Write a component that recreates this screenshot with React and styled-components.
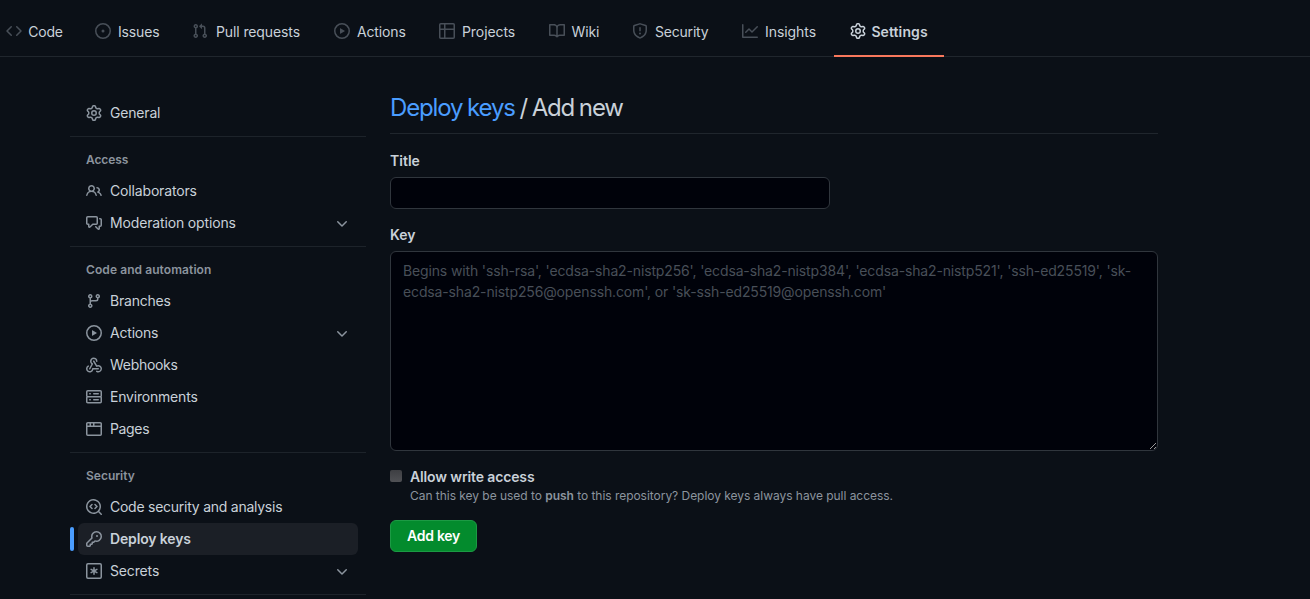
import React from "react";
import styled, { createGlobalStyle } from "styled-components";

const Global = createGlobalStyle`
  * { box-sizing: border-box; }
  body {
    margin: 0;
    background: #0b1017;
    color: #c9d1d9;
    font: 14px/21px Inter, "Liberation Sans", sans-serif;
    overflow: hidden;
  }
`;

const paths = {
  code: "M4.72 3.22a.75.75 0 011.06 1.06L2.06 8l3.72 3.72a.75.75 0 11-1.06 1.06L.47 8.53a.75.75 0 010-1.06l4.25-4.25zm6.56 0a.75.75 0 10-1.06 1.06L13.94 8l-3.72 3.72a.75.75 0 101.06 1.06l4.25-4.25a.75.75 0 000-1.06l-4.25-4.25z",
  issue: "M8 9.5a1.5 1.5 0 100-3 1.5 1.5 0 000 3zM8 0a8 8 0 100 16A8 8 0 008 0zM1.5 8a6.5 6.5 0 1113 0 6.5 6.5 0 01-13 0z",
  pull: "M7.177 3.073L9.573.677A.25.25 0 0110 .854v4.792a.25.25 0 01-.427.177L7.177 3.427a.25.25 0 010-.354zM3.75 2.5a.75.75 0 100 1.5.75.75 0 000-1.5zm-2.25.75a2.25 2.25 0 113 2.122v5.256a2.251 2.251 0 11-1.5 0V5.372A2.25 2.25 0 011.5 3.25zM11 2.5h-1V4h1a1 1 0 011 1v5.628a2.251 2.251 0 101.5 0V5A2.5 2.5 0 0011 2.5zm1 10.25a.75.75 0 111.5 0 .75.75 0 01-1.5 0zM3.75 12a.75.75 0 100 1.5.75.75 0 000-1.5z",
  play: "M1.5 8a6.5 6.5 0 1113 0 6.5 6.5 0 01-13 0zM8 0a8 8 0 100 16A8 8 0 008 0zM6.379 5.227A.25.25 0 006 5.442v5.117a.25.25 0 00.379.214l4.264-2.559a.25.25 0 000-.428L6.379 5.227z",
  table: "M1.75 0A1.75 1.75 0 000 1.75v12.5C0 15.216.784 16 1.75 16h12.5A1.75 1.75 0 0016 14.25V1.75A1.75 1.75 0 0014.25 0H1.75zM1.5 1.75a.25.25 0 01.25-.25H5v4H1.5V1.75zM6.5 1.5v4h8V1.75a.25.25 0 00-.25-.25H6.5zM5 7H1.5v7.25c0 .138.112.25.25.25H5V7zm1.5 7.5V7h8v7.25a.25.25 0 01-.25.25H6.5z",
  book: "M0 1.75A.75.75 0 01.75 1h4.253c1.227 0 2.317.59 3 1.501A3.744 3.744 0 0111.006 1h4.245a.75.75 0 01.75.75v10.5a.75.75 0 01-.75.75h-4.507a2.25 2.25 0 00-1.591.659l-.622.621a.75.75 0 01-1.06 0l-.622-.621A2.25 2.25 0 005.258 13H.75a.75.75 0 01-.75-.75V1.75zm8.755 3a2.25 2.25 0 012.25-2.25H14.5v9h-3.757c-.71 0-1.4.201-1.992.572l.004-7.322zm-1.504 7.324l.004-5.073-.002-2.253A2.25 2.25 0 005.003 2.5H1.5v9h3.757a3.75 3.75 0 011.994.574z",
  shield: "M7.467.133a1.75 1.75 0 011.066 0l5.25 1.68A1.75 1.75 0 0115 3.48V7c0 1.566-.32 3.182-1.303 4.682-.983 1.498-2.585 2.813-5.032 3.855a1.7 1.7 0 01-1.33 0c-2.447-1.042-4.049-2.357-5.032-3.855C1.32 10.182 1 8.566 1 7V3.48a1.75 1.75 0 011.217-1.667l5.25-1.68zm.61 1.429a.25.25 0 00-.153 0l-5.25 1.68a.25.25 0 00-.174.238V7c0 1.358.275 2.666 1.057 3.86.784 1.194 2.121 2.34 4.366 3.297a.2.2 0 00.154 0c2.245-.956 3.582-2.104 4.366-3.298C13.225 9.666 13.5 8.36 13.5 7V3.48a.25.25 0 00-.174-.237l-5.25-1.68zM9 10.5a1 1 0 11-2 0 1 1 0 012 0zm-.25-5.75a.75.75 0 10-1.5 0v3a.75.75 0 001.5 0v-3z",
  graph: "M1.5 1.75a.75.75 0 00-1.5 0v12.5c0 .414.336.75.75.75h14.5a.75.75 0 000-1.5H1.5V1.75zm14.28 2.53a.75.75 0 00-1.06-1.06L10 7.94 7.53 5.47a.75.75 0 00-1.06 0L3.22 8.72a.75.75 0 001.06 1.06L7 7.06l2.47 2.47a.75.75 0 001.06 0l5.25-5.25z",
  gear: "M7.429 1.525a6.593 6.593 0 011.142 0c.036.003.108.036.137.146l.289 1.105c.147.56.55.967.997 1.189.174.086.341.183.501.29.417.278.97.423 1.53.27l1.102-.303c.11-.03.175.016.195.046.219.31.41.641.573.989.014.031.022.11-.059.19l-.815.806c-.411.406-.562.957-.53 1.456a4.588 4.588 0 010 .582c-.032.499.119 1.05.53 1.456l.815.806c.08.08.073.159.059.19a6.494 6.494 0 01-.573.99c-.02.029-.086.074-.195.045l-1.103-.303c-.559-.153-1.112-.008-1.529.27-.16.107-.327.204-.5.29-.449.222-.851.628-.998 1.189l-.289 1.105c-.029.11-.101.143-.137.146a6.613 6.613 0 01-1.142 0c-.036-.003-.108-.037-.137-.146l-.289-1.105c-.147-.56-.55-.967-.997-1.189a4.502 4.502 0 01-.501-.29c-.417-.278-.97-.423-1.53-.27l-1.102.303c-.11.03-.175-.016-.195-.046a6.492 6.492 0 01-.573-.989c-.014-.031-.022-.11.059-.19l.815-.806c.411-.406.562-.957.53-1.456a4.587 4.587 0 010-.582c.032-.499-.119-1.05-.53-1.456l-.815-.806c-.08-.08-.073-.159-.059-.19a6.44 6.44 0 01.573-.99c.02-.029.086-.075.195-.045l1.103.303c.559.153 1.112.008 1.529-.27.16-.107.327-.204.5-.29.449-.222.851-.628.998-1.189l.289-1.105c.029-.11.101-.143.137-.146zM8 0c-.236 0-.47.01-.701.03-.743.065-1.29.615-1.458 1.261l-.29 1.106c-.017.066-.078.158-.211.224a5.994 5.994 0 00-.668.386c-.123.082-.233.09-.3.071L3.27 2.776c-.644-.177-1.392.02-1.82.63a7.977 7.977 0 00-.704 1.217c-.315.675-.111 1.422.363 1.891l.815.806c.05.048.098.147.088.294a6.084 6.084 0 000 .772c.01.147-.038.246-.088.294l-.815.806c-.474.469-.678 1.216-.363 1.891.2.428.436.835.704 1.218.428.609 1.176.806 1.82.63l1.103-.303c.066-.019.176-.011.299.071.213.143.436.272.668.386.133.066.194.158.212.224l.289 1.106c.169.646.715 1.196 1.458 1.26a8.094 8.094 0 001.402 0c.743-.064 1.29-.614 1.458-1.26l.29-1.106c.017-.066.078-.158.211-.224a5.98 5.98 0 00.668-.386c.123-.082.233-.09.3-.071l1.102.302c.644.177 1.392-.02 1.82-.63.268-.382.505-.789.704-1.217.315-.675.111-1.422-.364-1.891l-.814-.806c-.05-.048-.098-.147-.088-.294a6.1 6.1 0 000-.772c-.01-.147.039-.246.088-.294l.814-.806c.475-.469.679-1.216.364-1.891a7.992 7.992 0 00-.704-1.218c-.428-.609-1.176-.806-1.82-.63l-1.103.303c-.066.019-.176.011-.299-.071a5.991 5.991 0 00-.668-.386c-.133-.066-.194-.158-.212-.224L10.16 1.29C9.99.645 9.444.095 8.701.031A8.094 8.094 0 008 0zm1.5 8a1.5 1.5 0 11-3 0 1.5 1.5 0 013 0zM11 8a3 3 0 11-6 0 3 3 0 016 0z",
  people: "M5.5 3.5a2 2 0 100 4 2 2 0 000-4zM2 5.5a3.5 3.5 0 115.898 2.549 5.507 5.507 0 013.034 4.084.75.75 0 11-1.482.235 4.001 4.001 0 00-7.9 0 .75.75 0 01-1.482-.236A5.507 5.507 0 013.102 8.05 3.49 3.49 0 012 5.5zM11 4a.75.75 0 100 1.5 1.5 1.5 0 01.666 2.844.75.75 0 00-.416.672v.352a.75.75 0 00.574.73c1.2.289 2.162 1.2 2.522 2.372a.75.75 0 101.434-.44 5.01 5.01 0 00-2.56-3.012A3 3 0 0011 4z",
  discussion: "M1.5 2.75a.25.25 0 01.25-.25h8.5a.25.25 0 01.25.25v5.5a.25.25 0 01-.25.25h-3.5a.75.75 0 00-.53.22L3.5 11.44V9.25a.75.75 0 00-.75-.75h-1a.25.25 0 01-.25-.25v-5.5zM1.75 1A1.75 1.75 0 000 2.75v5.5C0 9.216.784 10 1.75 10H2v1.543a1.457 1.457 0 002.487 1.03L7.061 10h3.189A1.75 1.75 0 0012 8.25v-5.5A1.75 1.75 0 0010.25 1h-8.5zM14.5 4.75a.25.25 0 00-.25-.25h-.5a.75.75 0 110-1.5h.5c.966 0 1.75.784 1.75 1.75v5.5A1.75 1.75 0 0114.25 12H14v1.543a1.457 1.457 0 01-2.487 1.03L9.22 12.28a.75.75 0 111.06-1.06l2.22 2.22v-2.19a.75.75 0 01.75-.75h1a.25.25 0 00.25-.25v-5.5z",
  branch: "M11.75 2.5a.75.75 0 100 1.5.75.75 0 000-1.5zm-2.25.75a2.25 2.25 0 113 2.122V6A2.5 2.5 0 0110 8.5H6a1 1 0 00-1 1v1.128a2.251 2.251 0 11-1.5 0V5.372a2.25 2.25 0 111.5 0v1.836A2.492 2.492 0 016 7h4a1 1 0 001-1v-.628A2.25 2.25 0 019.5 3.25zM4.25 12a.75.75 0 100 1.5.75.75 0 000-1.5zM3.5 3.25a.75.75 0 111.5 0 .75.75 0 01-1.5 0z",
  server: "M1.75 1A1.75 1.75 0 000 2.75v4c0 .372.116.717.314 1a1.742 1.742 0 00-.314 1v4c0 .966.784 1.75 1.75 1.75h12.5A1.75 1.75 0 0016 12.75v-4c0-.372-.116-.717-.314-1 .198-.283.314-.628.314-1v-4A1.75 1.75 0 0014.25 1H1.75zm0 7.5a.25.25 0 00-.25.25v4c0 .138.112.25.25.25h12.5a.25.25 0 00.25-.25v-4a.25.25 0 00-.25-.25H1.75zM1.5 2.75a.25.25 0 01.25-.25h12.5a.25.25 0 01.25.25v4a.25.25 0 01-.25.25H1.75a.25.25 0 01-.25-.25v-4zm5.5 2A.75.75 0 017.75 4h4.5a.75.75 0 010 1.5h-4.5A.75.75 0 017 4.75zM7.75 10a.75.75 0 000 1.5h4.5a.75.75 0 000-1.5h-4.5zM3 4.75A.75.75 0 013.75 4h.5a.75.75 0 010 1.5h-.5A.75.75 0 013 4.75zM3.75 10a.75.75 0 000 1.5h.5a.75.75 0 000-1.5h-.5z",
  browser: "M0 2.75C0 1.784.784 1 1.75 1h12.5c.966 0 1.75.784 1.75 1.75v10.5A1.75 1.75 0 0114.25 15H1.75A1.75 1.75 0 010 13.25V2.75zm1.75-.25a.25.25 0 00-.25.25V4.5h2v-2H1.75zM5 2.5v2h2v-2H5zm3.5 0v2h6V2.75a.25.25 0 00-.25-.25H8.5zm6 3.5h-13v7.25c0 .138.112.25.25.25h12.5a.25.25 0 00.25-.25V6z",
  codescan: "M8.47 4.97a.75.75 0 000 1.06L9.94 7.5 8.47 8.97a.75.75 0 101.06 1.06l2-2a.75.75 0 000-1.06l-2-2a.75.75 0 00-1.06 0zM6.53 6.03a.75.75 0 00-1.06-1.06l-2 2a.75.75 0 000 1.06l2 2a.75.75 0 101.06-1.06L5.06 7.5l1.47-1.47zM12.246 13.307a7.5 7.5 0 111.06-1.06l2.474 2.473a.75.75 0 11-1.06 1.06l-2.474-2.473zM1.5 7.5a6 6 0 1110.386 4.094.75.75 0 00-.292.293A6 6 0 011.5 7.5z",
  key: "M6.5 5.5a4 4 0 112.731 3.795.75.75 0 00-.768.18L7.44 10.5H6.25a.75.75 0 00-.75.75v1.19l-.06.06H4.25a.75.75 0 00-.75.75v1.19l-.06.06H1.75a.25.25 0 01-.25-.25v-1.69l5.024-5.023a.75.75 0 00.181-.768A3.995 3.995 0 016.5 5.5zm4-5.5a5.5 5.5 0 00-5.348 6.788L.22 11.72a.75.75 0 00-.22.53v2C0 15.216.784 16 1.75 16h2a.75.75 0 00.53-.22l.5-.5a.75.75 0 00.22-.53V14h.75a.75.75 0 00.53-.22l.5-.5a.75.75 0 00.22-.53V12h.75a.75.75 0 00.53-.22l.932-.932A5.5 5.5 0 1010.5 0zm.5 6a1 1 0 100-2 1 1 0 000 2z",
  chevron: "M12.78 6.22a.75.75 0 010 1.06l-4.25 4.25a.75.75 0 01-1.06 0L3.22 7.28a.75.75 0 011.06-1.06L8 9.94l3.72-3.72a.75.75 0 011.06 0z",
};

const webhookPaths = [
  "M5.5 4.25a2.25 2.25 0 014.5 0 .75.75 0 001.5 0 3.75 3.75 0 10-6.14 2.889l-2.272 4.258a.75.75 0 001.324.706L7 7.25a.75.75 0 00-.309-1.015A2.25 2.25 0 015.5 4.25z",
  "M7.364 3.607a.75.75 0 011.03.257l2.608 4.349a3.75 3.75 0 11-.628 6.785.75.75 0 01.752-1.299 2.25 2.25 0 10-.033-3.88.75.75 0 01-1.03-.256L7.107 4.636a.75.75 0 01.257-1.03z",
  "M2.9 8.776A.75.75 0 012.625 9.8 2.25 2.25 0 106 11.75a.75.75 0 01.75-.751h5.5a.75.75 0 010 1.5H7.425a3.751 3.751 0 11-5.55-3.998.75.75 0 011.024.274z",
];

const Svg = styled.svg`
  width: 16px;
  height: 16px;
  flex: none;
  display: block;
  fill: currentColor;
  color: ${(p) => p.$color};
`;

function Icon({ name, color = "#8b949e" }) {
  return (
    <Svg viewBox="0 0 16 16" $color={color} fillRule="evenodd" aria-hidden="true">
      {name === "webhook" && webhookPaths.map((d) => <path key={d} d={d} />)}
      {name === "asterisk" && (
        <g fill="none" stroke="currentColor">
          <rect x="0.75" y="0.75" width="14.5" height="14.5" rx="1.2" strokeWidth="1.5" />
          <path d="M8 4.7v6.6M5.1 6.35l5.8 3.3M10.9 6.35l-5.8 3.3" strokeWidth="1.5" strokeLinecap="round" />
        </g>
      )}
      {paths[name] && <path d={paths[name]} />}
    </Svg>
  );
}

const Label = styled.span`
  letter-spacing: ${(p) => p.$track || 0}px;
  white-space: nowrap;
`;

const NavBar = styled.nav`
  display: flex;
  height: 57px;
  padding-top: 7px;
  border-bottom: 1px solid #20262d;
`;

const NavList = styled.div`
  display: flex;
  height: 50px;
  margin-left: -10px;
`;

const Tab = styled.a`
  display: flex;
  flex: none;
  align-items: center;
  gap: ${(p) => p.$gap}px;
  width: ${(p) => p.$width}px;
  padding-left: 16px;
  border-bottom: 2px solid ${(p) => (p.$active ? "#f9785c" : "transparent")};
  font-weight: ${(p) => (p.$active ? 600 : 400)};
`;

const Layout = styled.div`
  display: flex;
  gap: 24px;
  padding: 40px 0 0 70px;
`;

const Sidebar = styled.aside`
  flex: none;
  width: 296px;
`;

const Group = styled.div`
  padding-bottom: 7px;
  border-bottom: 1px solid #1d232a;
`;

const GroupTitle = styled.h2`
  margin: 0;
  padding: 14px 16px 6px;
  color: #8b949e;
  font-size: 12px;
  font-weight: 600;
  line-height: 18px;
`;

const Item = styled.a`
  position: relative;
  display: flex;
  align-items: center;
  gap: 8px;
  height: 32px;
  margin: 0 8px;
  padding: 0 8px;
  border-radius: 6px;
  line-height: 20px;
  font-weight: ${(p) => (p.$active ? 600 : 400)};
  background: ${(p) => (p.$active ? "#1b1f26" : "transparent")};
`;

const ActiveMark = styled.span`
  position: absolute;
  left: -8px;
  top: 4px;
  width: 4px;
  height: 24px;
  border-radius: 6px;
  background: #4a9dff;
`;

const Grow = styled.span`
  flex: 1;
`;

const Main = styled.main`
  flex: none;
  width: 768px;
`;

const Heading = styled.h1`
  margin: -8px 0 16px;
  padding-bottom: 7px;
  border-bottom: 1px solid #20262d;
  font-size: 24px;
  font-weight: 400;
  line-height: 37px;
  letter-spacing: ${(p) => p.$track}px;
  word-spacing: -0.9px;
`;

const Crumb = styled.a`
  color: #4a9dff;
`;

const FieldLabel = styled.label`
  display: block;
  margin-bottom: 6px;
  font-weight: 600;
`;

const TextInput = styled.input`
  display: block;
  width: 440px;
  height: 32px;
  margin-bottom: 15px;
  border: 1px solid #30363d;
  border-radius: 6px;
  background: #00020a;
  outline: none;
`;

const KeyArea = styled.textarea`
  display: block;
  width: 768px;
  height: 200px;
  padding: 8px 12px;
  border: 1px solid #30363d;
  border-radius: 6px;
  background: #00020a;
  color: #c9d1d9;
  color-scheme: dark;
  font: inherit;
  letter-spacing: ${(p) => p.$track}px;
  outline: none;
  &::placeholder { color: #484f58; opacity: 1; }
`;

const CheckRow = styled.div`
  display: grid;
  grid-template-columns: 12px 1fr;
  column-gap: 8px;
  margin-top: 15px;
`;

const CheckBox = styled.span`
  width: 12px;
  height: 12px;
  margin-top: 4px;
  border-radius: 2px;
  background: linear-gradient(#3e3f43, #505155);
`;

const CheckLabel = styled.label`
  font-weight: 600;
  letter-spacing: ${(p) => p.$track}px;
`;

const Note = styled.p`
  grid-column: 2;
  margin: 0;
  color: #8b949e;
  font-size: 12px;
  line-height: 18px;
  letter-spacing: ${(p) => p.$track}px;
  b { font-weight: 600; }
`;

const AddButton = styled.button`
  display: block;
  width: 87px;
  height: 32px;
  margin-top: 15px;
  padding: 0;
  border: 1px solid #1c9a44;
  border-radius: 6px;
  background: #038b2d;
  color: #fff;
  font: 600 14px/20px Inter, "Liberation Sans", sans-serif;
  letter-spacing: ${(p) => p.$track}px;
`;

const tabs = [
  { icon: "code", label: "Code", width: 89, gap: 6.3, track: -0.25 },
  { icon: "issue", label: "Issues", width: 97, gap: 7, track: -0.15 },
  { icon: "pull", label: "Pull requests", width: 142, gap: 8, track: -0.11 },
  { icon: "play", label: "Actions", width: 105, gap: 7, track: -0.15 },
  { icon: "table", label: "Projects", width: 110, gap: 7, track: -0.08 },
  { icon: "book", label: "Wiki", width: 83, gap: 6.5, track: -0.15 },
  { icon: "shield", label: "Security", width: 110, gap: 7, track: -0.2 },
  { icon: "graph", label: "Insights", width: 108, gap: 7, track: -0.07 },
  { icon: "gear", label: "Settings", width: 110, gap: 5.4, track: 0.1, active: true },
];

const groups = [
  { items: [{ icon: "gear", label: "General", track: -0.18 }] },
  {
    title: "Access",
    track: -0.1,
    items: [
      { icon: "people", label: "Collaborators", track: -0.16 },
      { icon: "discussion", label: "Moderation options", track: -0.15, more: true },
    ],
  },
  {
    title: "Code and automation",
    track: 0.08,
    items: [
      { icon: "branch", label: "Branches", track: -0.22 },
      { icon: "play", label: "Actions", track: -0.2, more: true },
      { icon: "webhook", label: "Webhooks", track: -0.3 },
      { icon: "server", label: "Environments", track: -0.2 },
      { icon: "browser", label: "Pages", track: -0.35 },
    ],
  },
  {
    title: "Security",
    items: [
      { icon: "codescan", label: "Code security and analysis", track: -0.25 },
      { icon: "key", label: "Deploy keys", track: -0.14, active: true },
      { icon: "asterisk", label: "Secrets", track: -0.15, more: true },
    ],
  },
];

export default function App() {
  return (
    <>
      <Global />
      <NavBar>
        <NavList>
          {tabs.map((t) => (
            <Tab key={t.label} $width={t.width} $gap={t.gap} $active={t.active}>
              <Icon name={t.icon} color={t.active ? "#c9d1d9" : "#484f58"} />
              <Label $track={t.track}>{t.label}</Label>
            </Tab>
          ))}
        </NavList>
      </NavBar>
      <Layout>
        <Sidebar>
          {groups.map((g, i) => (
            <Group key={i}>
              {g.title && <GroupTitle><Label $track={g.track}>{g.title}</Label></GroupTitle>}
              {g.items.map((it) => (
                <Item key={it.label} $active={it.active}>
                  {it.active && <ActiveMark />}
                  <Icon name={it.icon} />
                  <Label $track={it.track}>{it.label}</Label>
                  <Grow />
                  {it.more && <Icon name="chevron" />}
                </Item>
              ))}
            </Group>
          ))}
        </Sidebar>
        <Main>
          <Heading $track={-1.15}>
            <Crumb>Deploy keys</Crumb> / Add new
          </Heading>
          <FieldLabel>Title</FieldLabel>
          <TextInput />
          <FieldLabel>Key</FieldLabel>
          <KeyArea
            $track={-0.14}
            placeholder="Begins with 'ssh-rsa', 'ecdsa-sha2-nistp256', 'ecdsa-sha2-nistp384', 'ecdsa-sha2-nistp521', 'ssh-ed25519', 'sk-ecdsa-sha2-nistp256@openssh.com', or 'sk-ssh-ed25519@openssh.com'"
          />
          <CheckRow>
            <CheckBox />
            <CheckLabel $track={-0.13}>Allow write access</CheckLabel>
            <Note $track={-0.036}>
              Can this key be used to <b>push</b> to this repository? Deploy keys always have pull access.
            </Note>
          </CheckRow>
          <AddButton $track={-0.25}>Add key</AddButton>
        </Main>
      </Layout>
    </>
  );
}
